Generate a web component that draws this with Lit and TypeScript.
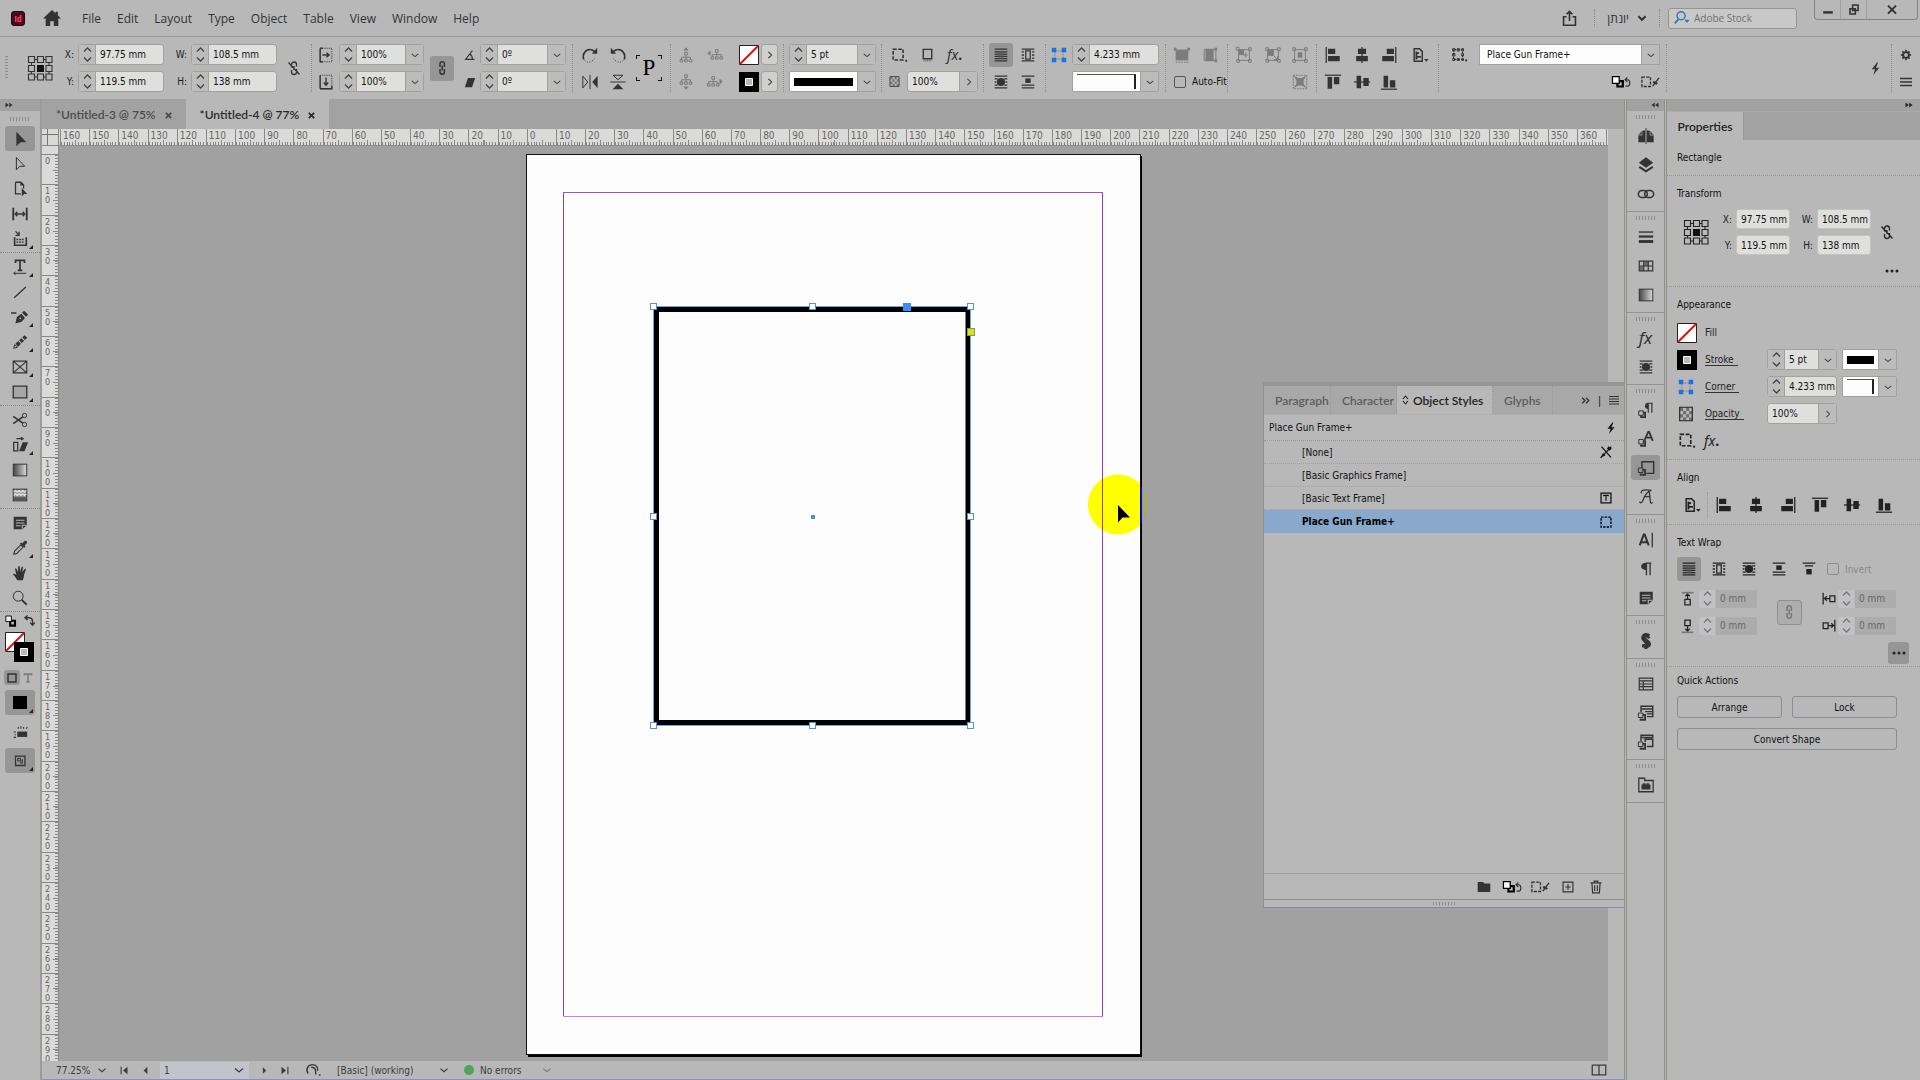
import { LitElement, html, svg, css, nothing } from "lit";
import { customElement } from "lit/decorators.js";
import { classMap } from "lit/directives/class-map.js";

/* ---------- icon set (20 x 20 grid, strokes by default, .f = filled) ---------- */
const wrapLines = svg`<path d="M3 3.5h14M3 16.5h14" stroke-width="1.6"/>`;
const ICONS: Record<string, unknown> = {
  select: svg`<path class="f" d="M6 2v16l4.6-4.4H17z"/>`,
  direct: svg`<path d="M6 2.8v13.6l3.8-3.9h5.4z"/>`,
  pageTool: svg`<path d="M5 2.500h6l3 3v4M5 2.500v13h6M11 2.500v3h3" stroke-width="1.400"/><path class="f" d="M12 9v9l2.600-2.400H18z"/>`,
  gap: svg`<path d="M2.500 3v14M17.500 3v14" stroke-width="2"/><path d="M5 10h10M7 7.500 4.600 10 7 12.500M13 7.500l2.400 2.500-2.400 2.500" stroke-width="1.500"/>`,
  collect: svg`<path d="M4 8v9h13V8" stroke-width="1.800"/><path d="M6 10.500h2m1 0h2m1 0h2M6 13.500h2m1 0h2m1 0h2" stroke-width="1.600"/><path d="M5 1.500l4 4M9 2v4H5" stroke-width="1.400"/>`,
  type: svg`<path d="M5 5.500V2.700h10v2.800M10 2.700v11M7.500 13.700h5" stroke-width="1.900"/><path d="M3 17h14M5 15.500 3 17l2 1.500"/>`,
  line: svg`<path d="M3.500 16.500l13-12" stroke-width="1.500"/>`,
  pen: svg`<path class="f" d="M5 17l1.500-7 5-3.500 4 4.500-4 4.500zM12.300 5.300l2.200-2.200 4.500 4-2.300 2.500z"/><path d="M0 5.500h6M5.500 16.500l4-4" stroke-width="1.600"/><circle cx="10.300" cy="11.500" r="1" fill="#b8b8b8" stroke="none"/>`,
  pencil: svg`<path d="M3 17l1.200-4.200 3 3z"/><path class="f" d="M5 12l3-3 3 3-3 3.200zM9 8l2.500-2.300 3 3L12 11zM12.500 4.800l2.700-2.300 2.800 2.800-2.500 2.400z"/>`,
  frame: svg`<path d="M2.500 3.500h15v13h-15zM2.500 3.500l15 13M17.500 3.500l-15 13" stroke-width="1.300"/>`,
  rect: svg`<path d="M2.500 3.500h15v13h-15z" stroke-width="1.500" fill="#a6a6a6"/>`,
  scissors: svg`<circle cx="15" cy="5" r="2.400"/><circle cx="15" cy="15" r="2.400"/><path d="M2.500 6l10.700 7.500M2.500 14l10.700-7.500" stroke-width="1.800"/>`,
  transform: svg`<path d="M3 7h4.500v9.500H3zM6 3h7M11 1.500l2.500 1.500L11 4.500" stroke-width="1.400"/><path class="f" d="M9 17l4-10h6l-4 10z"/>`,
  gradient: svg`<rect x="2.500" y="3.500" width="15" height="13" fill="url(#gr)"/>`,
  feather: svg`<rect x="2.500" y="3.500" width="15" height="13" fill="#8a8a8a"/><path d="M3 7l2-2 2 2 2-2 2 2 2-2 2 2 2-2M3 10.500l2-2 2 2 2-2 2 2 2-2 2 2 2-2" stroke="#e0e0e0" stroke-width="1.500"/><path d="M3.500 14h13" stroke-width="3" stroke="#555"/>`,
  note: svg`<path class="f" d="M3 3h14.500v9.500l-5 4.500H3z"/><path d="M5.500 7h9.500M5.500 10h9.500M5.500 13h5M12.500 16.500v-4h4.500" stroke="#b8b8b8" stroke-width="1.200"/>`,
  dropper: svg`<path d="M3 17l1-3.500 7-7 2.500 2.500-7 7z" stroke-width="1.200"/><path class="f" d="M10 5l1.300-1 1.500.6L15 2.200c1.800-1 3.600.8 2.600 2.600L15.300 7l.6 1.500-1 1.300z"/>`,
  hand: svg`<path class="f" d="M7 18c-1.500-2.500-3-4.500-5-6.500.6-1.300 2-1 4 .8L4.500 5.500c.2-1 1.400-1 1.700 0L7.700 9 8 3c.2-1.200 1.600-1.200 1.800 0l.3 5.700L11.700 3.500c.4-1 1.600-.8 1.600.3l-.8 5.400 2.600-3.700c.8-.7 1.700 0 1.400 1L14.500 12c-.3 2.600-.5 4-1.500 6z"/>`,
  zoom: svg`<circle cx="8" cy="8" r="5.500"/><path d="M12 12l5.500 5.500" stroke-width="2"/>`,
  screen: svg`<path class="f" d="M7 9.500h11v6H7z"/><path d="M8 6.500v-2M11 6.500v-3M14 6.500v-2M17 6.500l1-2M5.500 10H3M5.500 13H4M5.500 16H3" stroke-width="1.200"/>`,
  preview: svg`<path d="M5 4.500h10.500v10.500H5z" stroke-width="1.400"/><path d="M7.500 7h3v3h-3zM11 10.500v2.500M12.500 8v5" />`,
  boxSel: svg`<path d="M5 5h10v10H5z" stroke-width="1.800"/>`,
  tSmall: svg`<path d="M5.500 7V5h9v2M10 5v10M8 15h4" stroke-width="1.800" stroke="#777"/>`,
  swap: svg`<path d="M5 5h4c3 0 5 2 5 5v4M7.500 2L4 5l3.500 3M11 11.500l3 3.500 3-3.500" stroke-width="1.900"/>`,
  defaults: svg`<path d="M9 8.500h6v6H9z" fill="none" stroke="#000" stroke-width="2.600"/><path d="M3.500 2.500h7v7h-7z" fill="#eee" stroke="#000"/>`,
  home: svg`<path class="f" d="M10 1L0 10.500h3V19h5v-5.500h4V19h5v-8.500h3L16.500 7V3h-2.500v1.800z"/>`,
  share: svg`<path d="M6.500 8H3v10h14V8h-3.500M10 13V2M6.500 5L10 1.700 13.500 5" stroke-width="1.900"/>`,
  chev: svg`<path d="M6 8.500l4 3.500 4-3.500" stroke-width="1.300"/>`,
  chevB: svg`<path d="M6 8l4 4 4-4" stroke-width="2.200"/>`,
  chevR: svg`<path d="M8 6l4 4-4 4" stroke-width="1.300"/>`,
  ffwd: svg`<path class="f" d="M3 5v10l6.500-5zM10.500 5v10l6.500-5z"/>`,
  rwd: svg`<path class="f" d="M9.500 5v10L3 10zM17 5v10l-6.500-5z"/>`,
  more: svg`<path d="M4 5l5 5-5 5M11 5l5 5-5 5" stroke-width="2.400"/>`,
  linkBroken: svg`<path d="M7.500 9.500V6.500a2.500 2.500 0 015 0v2M12.500 11v3a2.500 2.500 0 01-5 0v-2M10 8v4M4.500 4.500l11 12" stroke-width="1.300"/>`,
  link: svg`<path d="M8 9V6a2.200 2.200 0 014.400 0v3M12.400 11v3A2.200 2.200 0 018 14v-3M10.200 7.500v5" stroke-width="1.500"/>`,
  scaleX: svg`<path d="M3.500 2.500h13v15h-13z" stroke-dasharray="1 1"/><path d="M3.500 2.500h3m-3 0v15h3M6 10h7M10.500 7.500L13.500 10l-3 2.500" stroke-width="1.500"/>`,
  scaleY: svg`<path d="M3.500 2.500h13v15h-13z" stroke-dasharray="1 1"/><path d="M3.500 2.500v15M3.500 17.500h13v-3M10 5v8M7.500 10.500l2.500 3 2.500-3" stroke-width="1.500"/>`,
  angle: svg`<path d="M15.500 15.500H4.500L13 4.500M10 9c2 1 3 3.500 3 6.500" stroke-width="1.400"/>`,
  shear: svg`<path class="f" d="M3.500 16.500l4-11.500h9l-4 11.500z"/>`,
  rotCW: svg`<path d="M3 15C1 9 5 4 10 4c2 0 3.500.7 5 2" stroke-width="1.700"/><path class="f" d="M12 8.500h6V2z"/><path d="M4 16c3 3 9 3 12-4" stroke-dasharray="1 2"/>`,
  rotCCW: svg`<path d="M17 15c2-6-2-11-7-11-2 0-3.500.7-5 2" stroke-width="1.700"/><path class="f" d="M8 8.500H2V2z"/><path d="M16 16c-3 3-9 3-12-4" stroke-dasharray="1 2"/>`,
  flipH: svg`<path d="M2 3.500v13L7.500 10zM10 2v16" /><path class="f" d="M18.500 3v14L12.500 10z"/>`,
  flipV: svg`<path d="M4.500 2.500h11L10 7.500zM1.500 10h17"/><path class="f" d="M4 18h12l-6-6z"/>`,
  treeU: svg`<path d="M8.500 7h3v3h-3zM3.500 15h3v2.500h-3zM8.500 15h3v2.500h-3zM13.500 15h3v2.500h-3zM10 10v5M5 15v-2.500h10V15"/><path class="f" d="M7 5l3-3.500L13 5z"/>`,
  treeL: svg`<path d="M10.500 4h3v3h-3zM5.500 12h3v2.500h-3zM10.500 12h3v2.500h-3zM15.500 12h3v2.500h-3zM12 7v5M7 12V9.500h10V12"/><path class="f" d="M5 5v6L1.500 8z"/>`,
  treeD: svg`<path d="M8.500 2h3v3h-3zM3.500 10h3v2.500h-3zM8.500 10h3v2.500h-3zM13.500 10h3v2.500h-3zM10 5v5M5 10V7.500h10V10"/><path class="f" d="M7 15l3 3.500L13 15z"/>`,
  treeR: svg`<path d="M6.500 4h3v3h-3zM1.500 12h3v2.500h-3zM6.500 12h3v2.500h-3zM11.500 12h3v2.500h-3zM8 7v5M3 12V9.500h10V12"/><path class="f" d="M15 6v7l3.500-3.500z"/>`,
  frameOpts: svg`<path d="M3.500 3.500h11v12h-11z" stroke-dasharray="4 1.700" stroke-width="1.700"/><circle class="f" cx="18" cy="16.500" r="1.200"/>`,
  square: svg`<path d="M5 4h10v11H5z" stroke-width="1.600"/><path d="M5.500 17.500h10" stroke-dasharray="1 1"/>`,
  checker: svg`<path d="M3 2.500h14v15H3z" stroke-width="1.300"/><path class="f" d="M3.500 3h3.300v3.600H3.500zM10.200 3h3.300v3.600h-3.300zM6.800 6.600h3.400v3.600H6.800zM13.500 6.600h3v3.600h-3zM3.500 10.200h3.300v3.600H3.500zM10.200 10.200h3.300v3.600h-3.300zM6.800 13.800h3.400V17H6.800zM13.500 13.800h3V17h-3z" opacity=".5"/>`,
  wrapNone: svg`${wrapLines}<path d="M3 6.500h14M3 9h14M3 11.500h14M3 14h14" stroke-width="1.200"/><path d="M7 5.500h6v9H7z" fill="#555" stroke="none" opacity=".55"/>`,
  wrapBox: svg`${wrapLines}<path d="M3 6.500h2.500M3 10h2.500M3 13.500h2.500M14.500 6.500H17M14.500 10H17M14.500 13.500H17M7.500 5.500h5v9h-5z" stroke-width="1.400"/>`,
  wrapShape: svg`${wrapLines}<path d="M3 6.500h3.500M3 10h2M3 13.500h3.500M13.500 6.500H17M15 10h2M13.500 13.500H17" stroke-width="1.400"/><circle class="f" cx="10" cy="10" r="4.500"/>`,
  wrapJump: svg`${wrapLines}<path d="M3 13.500h14" stroke-width="1.400"/><path class="f" d="M7 6h6v5H7z"/>`,
  wrapNext: svg`<path d="M3 3.500h14M5.500 6.500h9" stroke-width="1.600"/><path class="f" d="M7 10h6v6H7z"/>`,
  corner: svg`<path d="M5.500 5.500h9v9h-9z" stroke="#8c7f77" stroke-dasharray="2 1"/><path fill="#1473e6" stroke="none" d="M2 2h5v5H2zM13 2h5v5h-5zM2 13h5v5H2zM13 13h5v5h-5z"/>`,
  fitFill: svg`<path d="M3.500 4.500h13v11h-13z" fill="#7c7c7c"/><path d="M3 18h14" stroke-dasharray="2 1"/><path class="f" d="M1 2h3v3H1zM16 2h3v3h-3z"/>`,
  fitProp: svg`<path d="M3.500 4h13v12h-13z"/><path class="f" d="M5 3h9v14H5zM15 15h3v3h-3zM15 2h3v3h-3z"/>`,
  fitCont: svg`<path d="M4 4h12v12H4zM1.500 1.500h3v3h-3zM15 2h3v3h-3zM2 15h3v3H2zM15 15h3v3h-3z"/><path class="f" d="M4 4h6v6H4z"/><path d="M9 10h5M12 7v6"/>`,
  fitFrame: svg`<path d="M4 4h12v12H4zM2 2h3v3H2zM15 2h3v3h-3zM2 15h3v3H2zM15 15h3v3h-3z"/><path class="f" d="M4 4h7v7H4z"/><path d="M11 11l4 4M15 11v4h-4"/>`,
  fitCenter: svg`<path d="M4 4h12v12H4zM2 2h3v3H2zM15 2h3v3h-3zM2 15h3v3H2zM15 15h3v3h-3z"/><path class="f" d="M7.500 7h5v6h-5z"/>`,
  fitSmart: svg`<path d="M2.500 2.500h15v15h-15z" stroke-dasharray="2 1"/><path class="f" d="M3 3l5 2.500h4L17 3l-3 5v4l3 5-5-3H8l-5 3 3-5V8z"/>`,
  alL: svg`<path d="M2.500 1v18" stroke-width="1.400"/><path class="f" d="M4.500 3h8v6h-8zM4.500 11h13v6h-13z"/>`,
  alC: svg`<path d="M10 1v18" stroke-width="1.400"/><path class="f" d="M5.500 3h9v6h-9zM3.500 11h13v6h-13z"/>`,
  alR: svg`<path d="M17.500 1v18" stroke-width="1.400"/><path class="f" d="M7.500 3h8v6h-8zM2.500 11h13v6h-13z"/>`,
  alT: svg`<path d="M1 2.500h18" stroke-width="1.400"/><path class="f" d="M4 4.500h5v13H4zM11 4.500h6v8h-6z"/>`,
  alM: svg`<path d="M1 10h18" stroke-width="1.400"/><path class="f" d="M4 3h5v14H4zM11.500 5.500h6v9h-6z"/>`,
  alB: svg`<path d="M1 18h18" stroke-width="1.400"/><path class="f" d="M4 3h5v13H4zM11 8h6v8h-6z"/>`,
  alTo: svg`<path d="M3.500 3h6l3 3v11h-9z" stroke-width="1.600"/><path d="M6 6v9M6 8h3M6 12h5" stroke-width="2"/><path class="f" d="M14.500 14.500h5L17 17.500z"/>`,
  objStyle: svg`<path d="M4 4h10v11H4z" stroke-dasharray="2.500 1.500"/><path d="M3 3h2.500v2.500H3zM8 3h2.500v2.500H8zM13 3h2v2.500h-2zM3 8.500h2.500V11H3zM13 8.500h2V11h-2zM3 14h2.500v2H3zM8 14h2.500v2H8zM13 14h2v2h-2z"/><circle class="f" cx="18" cy="16" r="1.200"/>`,
  clearOv: svg`<path d="M6 9h6v6H6z" stroke="#000" stroke-width="2.400"/><path d="M.5 4h7.500v7.500H.5z" fill="#fff" stroke="#000" stroke-width="1.400"/><path d="M15 7.500h2.500c3 0 3 7 0 7H15M17 5l-2.500 2.500L17 10" stroke-width="1.300"/>`,
  clearAttr: svg`<path d="M1 4.500h9.500v10.500H1z" stroke-dasharray="3.500 1.300" stroke-width="1.500"/><path d="M13 14.500L20 5.500" stroke-width="1.500"/><path class="f" d="M14 8.500l5 3-2 1.500-4-2z"/>`,
  bolt: svg`<path class="f" d="M12 2L5 11h4.500L7 18.500 15 9h-4.500L13.500 2z"/>`,
  gear: svg`<circle cx="10" cy="10" r="3.600" stroke-width="2.400"/><path d="M10 3.500v3M10 13.500v3M3.500 10h3M13.500 10h3M5.500 5.500l2 2M12.500 12.500l2 2M14.500 5.500l-2 2M7.500 12.500l-2 2" stroke-width="2"/>`,
  menu: svg`<path d="M4 6.500h12M4 10h12M4 13.500h12" stroke-width="1.300"/>`,
  menu4: svg`<path d="M5 6.500h10M5 9h10M5 11.500h10M5 14h10"/>`,
  pages: svg`<path class="f" d="M1.500 9l4-4.500 3.500-1v13.500H1.500zM11 3.500l3.500 1 4 4.500v8H11z"/><path d="M10 1v18" stroke-width="1"/><path d="M5.500 5v4h-4M14.500 5v4h4" stroke="#b8b8b8" stroke-width=".8"/>`,
  layers: svg`<path class="f" d="M10 1.500L18 7.500 10 13 2 7.500z"/><path d="M2.500 12L10 17l7.500-5" stroke-width="2.400"/>`,
  links: svg`<rect x="1.500" y="6" width="10" height="8" rx="4" stroke-width="1.700"/><rect x="8.500" y="6" width="10" height="8" rx="4" stroke-width="1.700"/>`,
  strokeP: svg`<path d="M2 4.500h16" stroke-width="1.500"/><path d="M2 9.500h16" stroke-width="2.400"/><path d="M2 15h16" stroke-width="3.200"/>`,
  swatches: svg`<path d="M2.500 4.500h15v11h-15zM2.500 10h15M7.500 4.500v11M12.500 4.500v11" stroke-width="1.300"/><path class="f" d="M8 5h4.500v5H8zM3 10.500h4v4.500H3z" opacity=".6"/>`,
  paraStyle: svg`<path d="M12.500 2v11M16.500 2v11M17.500 2.500h-5" stroke-width="1.300"/><path class="f" d="M12.500 2v7c-5 .5-5-7 0-7z"/><path d="M2 11h5v5H2z" fill="#b8b8b8"/><path d="M7 13h2v5H4.500v-1.500" stroke-width="2"/>`,
  charStyle: svg`<path d="M8.500 11L12.500 2h1l4 10M10 8.500h6" stroke-width="2"/><path d="M2 10.500h5v5H2z" fill="#b8b8b8"/><path d="M7 12.500h2v5H4.500v-1.500" stroke-width="2"/>`,
  objStyles: svg`<path d="M5.500 10V3h13v13h-8" stroke-width="1.600"/><path d="M1.500 10h5v5h-5z"/><path d="M6.500 12h2.500v5.500H4V16" stroke-width="2"/>`,
  glyphs: svg`<path d="M5 6C3.500 2 9 1.500 16 2.500 12 3 8 9 6.500 14 5.500 17 3 17 3 15M13.500 2.500L15 16c.5 1.500 1.500 1 2.500 0M8 9.500h7" stroke-width="1.400"/>`,
  charP: svg`<path d="M3 16L7.500 4h1L13 16M4.500 12.500h7" stroke-width="2.200"/><path d="M17 2v16" stroke-width="1.400"/>`,
  paraP: svg`<path d="M10.500 3v14M14.500 3v14M16 3.500h-6" stroke-width="1.500"/><path class="f" d="M10.500 3v8C2.500 11 2.500 3 10.500 3z"/>`,
  script: svg`<path class="f" d="M8 1.500c2.500-1 5.500 0 6.500 1.500l-1 2 1.500 1-2 1.500-4-2 5.500 5c2 2.500 1 6-2 7l-1.500 1.500H8l.5-1.500-3-.5v-3l3-1 2 2L5.500 9C4 7 4.500 3.500 8 1.500z"/>`,
  table: svg`<path d="M2.500 3.500h15v13h-15zM2.500 6.500h15M2.500 10h15M2.500 13h15M7 6.500v10" stroke-width="1.300"/>`,
  tblStyle: svg`<path d="M4.500 9V2.500h13V14H11M4.500 5.500h13M9 8.500h8.500M11 11h6.500" stroke-width="1.600"/><path d="M1.500 10h5v5h-5z"/><path d="M6.500 12h2.500v5.500H4V16" stroke-width="2"/>`,
  cellStyle: svg`<path d="M4.500 9V2.500h13V5h-13M9 10V7h8.500v8H11" stroke-width="1.600"/><path d="M1.500 10h5v5h-5z"/><path d="M6.500 12h2.500v5.500H4V16" stroke-width="2"/>`,
  library: svg`<path d="M2 2.500h6.500V5H18v12.500H2z" stroke-width="1.400"/><path class="f" d="M5 9.500h1.500V8h3v1.500h1V8h3v1.500H15V15H5z"/>`,
  none: svg`<path d="M4 16.500L16 4M5 4l10.500 12" stroke-width="1.400"/><path class="f" d="M4.500 16l2-5 3 2.500zM13 3.500l3.500 3-3 2-2.500-2.500z"/>`,
  txtFrame: svg`<path d="M4.500 4.500h11v11h-11z" stroke-width="1.400"/><path d="M7.500 8V7h5v1M10 7v6" stroke-width="1.300"/>`,
  objFrame: svg`<path d="M4.500 4.500h11v11h-11z" stroke-dasharray="2.700 1.300" stroke-width="1.500"/>`,
  folder: svg`<path class="f" d="M3 4.500h6l1.500 1.500H17v9.500H3z"/>`,
  plusBox: svg`<path d="M4.500 4.500h11v11h-11zM10 7v6M7 10h6" stroke-width="1.300"/>`,
  trash: svg`<path d="M4 5.500h12M8 5V3.500h4V5M5.500 6l.7 10.500h7.600L14.500 6M8.500 8v6.500M11.500 8v6.500" stroke-width="1.300"/>`,
  offT: svg`<path d="M3 3h13" stroke-width="1.800" stroke="#777"/><path d="M9.500 4v6M7 7l2.500-2.500L12 7M6.500 10.500h6v6h-6z" stroke-width="1.400"/>`,
  offB: svg`<path d="M3 17h13" stroke-width="1.800" stroke="#777"/><path d="M9.500 16v-6M7 13l2.500 2.500L12 13M6.500 3.500h6v6h-6z" stroke-width="1.400"/>`,
  offL: svg`<path d="M3.500 3v13M5 9.500h6M7.500 7L5 9.500 7.500 12M11 6.500h5.500v6.500H11z" stroke-width="1.400"/>`,
  offR: svg`<path d="M16.500 3v13M15 9.500H9M12.500 7L15 9.500 12.500 12M3.500 6.500H9v6.500H3.500z" stroke-width="1.400"/>`,
  first: svg`<path d="M5.500 5v10" stroke-width="1.500"/><path class="f" d="M14 5v10l-6-5z"/>`,
  prev: svg`<path class="f" d="M12.500 5v10l-5-5z"/>`,
  next: svg`<path class="f" d="M7.500 5v10l5-5z"/>`,
  last: svg`<path d="M14.500 5v10" stroke-width="1.500"/><path class="f" d="M6 5v10l6-5z"/>`,
  preflight: svg`<path d="M4.500 14c-3-5 0-10 5-10 4 0 6.500 3 5.500 7" stroke-width="1.600"/><path d="M8 7c3 0 5 2 5 5v3" stroke-width="1.600"/><circle class="f" cx="17.500" cy="15.500" r="1"/>`,
  split: svg`<path d="M2.500 4.500h15v11h-15zM10 4.500v11" stroke-width="1.400"/>`,
  min: svg`<path d="M4 13h12" stroke-width="3"/>`,
  restore: svg`<path d="M8.500 4.500h6v6h-6zM5.500 8.500h6v6h-6z" stroke-width="1.700"/>`,
  close: svg`<path d="M5 4.500l10 10M15 4.500l-10 10" stroke-width="2.500"/>`,
  tabX: svg`<path d="M4 4l12 12M16 4L4 16" stroke-width="4"/>`,
  search: svg`<circle cx="9" cy="7.500" r="4.500" stroke="#2f6fb5" stroke-width="1.500"/><path d="M6 11.500L2 16" stroke="#2f6fb5" stroke-width="1.800"/><path d="M12.500 12h6l-3 3.500z" fill="#1f78c8" stroke="none"/>`,
  dots: svg`<circle class="f" cx="4.500" cy="10" r="1.700"/><circle class="f" cx="10" cy="10" r="1.700"/><circle class="f" cx="15.500" cy="10" r="1.700"/>`,
};

const ic = (name: string, size = 18) => svg`<svg class="ic" viewBox="0 0 20 20" width=${size} height=${size} aria-hidden="true">
  ${name === "gradient" ? svg`<defs><linearGradient id="gr"><stop offset="0" stop-color="#444"/><stop offset="1" stop-color="#dcdcdc"/></linearGradient></defs>` : nothing}
  ${ICONS[name]}</svg>`;

const btn = (name: string, cls = "", size = 18, label = name) =>
  html`<button class="b ${cls}" aria-label=${label}>${ic(name, size)}</button>`;

const fx = (dot = true) => html`<button class="b fx" aria-label="Effects"><i>fx</i>${dot ? html`<span class="fdot">.</span>` : nothing}</button>`;

const refGrid = svg`<svg class="ic" width="26" height="26" viewBox="0 0 26 26" aria-hidden="true">
  <path d="M1.500 1.500h6v6h-6zM10.500 1.500h6v6h-6zM19 1.500h6v6h-6zM1.500 10.500h6v6h-6zM19 10.500h6v6h-6zM1.500 19h6v6h-6zM10.500 19h6v6h-6zM19 19h6v6h-6zM7.500 4.500h3M16.500 4.500h2.500M7.500 22h3M16.500 22h2.500M4.500 7.500v3M4.500 16.500v2.500M22 7.500v3M22 16.500v2.500"/>
  <path fill="#111" stroke="none" d="M10 10h7v7h-7z"/></svg>`;

const spin = html`<button class="spin" aria-label="Step value"><svg class="ic" width="15" height="19" viewBox="0 0 15 19"><path d="M4 6.500L7.500 3 11 6.500M4 12.500L7.500 16 11 12.500" stroke-width="1.300"/></svg></button>`;

let uid = 0;
interface FieldOpts { spin?: boolean; drop?: string; off?: boolean; cls?: string }
const field = (label: string, value: string, o: FieldOpts = {}) => html`<span class="field ${o.cls ?? ""} ${o.off ? "off" : ""}">
  ${o.spin ? spin : nothing}<input aria-label=${label} .value=${value} ?disabled=${!!o.off} />${o.drop
    ? html`<button class="drop" aria-label="${label} options">${ic(o.drop, 16)}</button>` : nothing}</span>`;
const labelled = (label: string, value: string, o: FieldOpts = {}) => {
  const id = `v${uid++}`;
  return html`<label class="lb" for=${id}>${label}</label><span class="field">${o.spin ? spin : nothing}<input id=${id} .value=${value} /></span>`;
};
const swatchNone = svg`<svg width="20" height="20" viewBox="0 0 20 20" aria-hidden="true"><path d="M.5.500h19v19H.5z" fill="#fff" stroke="#222"/><path d="M1 19L19 1" stroke="#e01010" stroke-width="2"/></svg>`;
const swatchStroke = svg`<svg width="20" height="20" viewBox="0 0 20 20" aria-hidden="true"><path d="M0 0h20v20H0z" fill="#000"/><path d="M6.500 6.500h7v7h-7z" fill="#b8b8b8" stroke="#fff"/></svg>`;
const strokePrev = html`<button class="prev" aria-label="Stroke type"><span class="bar"></span></button><button class="drop" aria-label="Stroke type options">${ic("chev", 16)}</button>`;
const cornerPrev = html`<button class="prev" aria-label="Corner shape"><span class="crn"></span></button><button class="drop" aria-label="Corner shape options">${ic("chev", 16)}</button>`;

const shared = css`
  :host { box-sizing: border-box; color: #333; --panel: #b8b8b9; --line: #9a9a9a; }
  *, *::before, *::after { box-sizing: border-box; }
  button, input, select { font: inherit; color: inherit; margin: 0; padding: 0; border: 0; background: none; border-radius: 0; min-width: 0; }
  svg { display: block; flex: none; }
  .ic { fill: none; stroke: currentColor; stroke-width: 1.100; overflow: visible; }
  .ic .f { fill: currentColor; stroke: none; }
  .b { display: flex; align-items: center; justify-content: center; }
  .on { background: #969696; border-radius: 3px; }
  .dim { color: #7c7c7c; }
  .fx { font: 14px "Noto Sans", sans-serif; line-height: 18px; align-items: baseline; }
  .fdot { font-weight: 700; }
  .field { display: flex; height: 21px; border: 1px solid #a2a29a; border-radius: 3px; background: #dfdfdd; color: #111; overflow: hidden; }
  .field input { flex: 1; width: 0; padding-left: 4px; }
  .spin { width: 17px; flex: none; background: #bcbcbc; border-right: 1px solid #a2a29a; display: flex; align-items: center; justify-content: center; color: #444; }
  .drop { width: 18px; flex: none; background: #bcbcbc; border-left: 1px solid #a2a29a; display: flex; align-items: center; justify-content: center; color: #444; }
  .field.off { background: #acacac; border-color: #b8b8b9; color: #666; }
  .off .spin { background: #c2c2c4; border-color: #b8b8b9; color: #777; }
  .lb { text-align: right; padding-right: 4px; line-height: 21px; color: #222; }
  .prevbox { display: flex; height: 21px; border: 1px solid #a2a29a; border-radius: 2px; overflow: hidden; }
  .prev { flex: 1; background: #fdfdfd; display: flex; padding: 0 4px; align-items: center; }
  .bar { flex: 1; height: 8px; background: #000; }
  .crn { flex: 1; height: 15px; border-top: 1px solid #555; border-right: 2px solid #222; }
`;

/* ---------- application menu bar ---------- */
@customElement("menu-bar")
class MenuBar extends LitElement {
  static styles = [shared, css`
    :host { display: flex; height: 37px; align-items: center; background: var(--panel); border-bottom: 1px solid var(--line); font: 12px "Open Sans", sans-serif; padding-left: 11px; }
    .logo { width: 14px; height: 15px; border-radius: 3px; background: #4b0a22; border: 1px solid #2d0413; color: #ff3f78; font: 700 8px/13px "Open Sans", sans-serif; text-align: center; margin-right: 18px; }
    nav { display: flex; gap: 16px; padding-left: 21px; flex: 1; }
    .sep { width: 1px; height: 18px; border-left: 1px dotted #888; }
    .user { display: flex; align-items: center; gap: 4px; padding: 0 8px 0 12px; }
    .share { margin-right: 16px; }
    .find { display: flex; align-items: center; width: 129px; height: 21px; border: 1px solid #95958f; border-radius: 3px; background: #c8c8c8; margin: 0 17px 0 8px; padding-left: 4px; font-size: 10px; }
    .find input { flex: 1; width: 0; padding-left: 3px; }
    .find input::placeholder { color: #707070; opacity: 1; }
    .win { display: flex; align-self: flex-start; height: 20px; border: 1px solid #85857f; border-top: 0; border-radius: 0 0 4px 4px; margin-right: 2px; width: 104px; }
    .win button { flex: 1; }
    .win button + button { border-left: 1px solid #a0a09a; }
    .win .x { flex: 2; }
  `];
  render() {
    return html`<span class="logo">Id</span>${btn("home", "", 18, "Home")}
      <nav>${["File", "Edit", "Layout", "Type", "Object", "Table", "View", "Window", "Help"].map((t) => html`<button>${t}</button>`)}</nav>
      ${btn("share", "share", 17, "Share")}<span class="sep"></span>
      <button class="user"><span dir="rtl">יונתן</span>${ic("chevB", 18)}</button><span class="sep"></span>
      <span class="find">${ic("search", 18)}<input aria-label="Search Adobe Stock" placeholder="Adobe Stock" /></span>
      <span class="win">${btn("min", "", 16, "Minimize")}${btn("restore", "", 18, "Restore")}${btn("close", "x", 16, "Close")}</span>`;
  }
}

/* ---------- control bar ---------- */
@customElement("control-bar")
class ControlBar extends LitElement {
  static styles = [shared, css`
    :host { display: flex; height: 62px; padding: 7px 0; background: var(--panel); font: 10px "DejaVu Sans Condensed", "Noto Sans", sans-serif; }
    .g { display: grid; grid-template-rows: 21px 21px; row-gap: 6px; height: 48px; align-items: center; justify-items: center; border-right: 1px dotted #8d8d8d; flex: none; }
    .g > .field, .g > .lb, .g > .prevbox { justify-self: stretch; }
    .tall { grid-row: 1 / 3; }
    .ref { width: 54px; padding-left: 27px; display: flex; align-items: center; flex: none; background: repeating-linear-gradient(#8c8c8c 0 1px, transparent 1px 3px) 5px 50% / 3px 24px no-repeat; }
    .linkon { width: 24px; height: 25px; }
    .wrapon { width: 24px; height: 24px; }
    .pos { grid-template-columns: 24px 86px 27px 86px 34px; }
    .pos .tall { grid-column: 5; }
    .scl { grid-template-columns: 27px 85px 36px 20px 86px; padding-right: 6px; }
    .scl .tall { grid-column: 3; }
    .rot { grid-template-columns: 34px 21px 42px; }
    .rot .tall { grid-column: 3; }
    .p { font: 23px/25px "Liberation Serif", serif; color: #000; width: 26px; height: 26px; text-align: center; background-image:
      linear-gradient(#111,#111), linear-gradient(#111,#111), linear-gradient(#111,#111), linear-gradient(#111,#111),
      linear-gradient(#111,#111), linear-gradient(#111,#111), linear-gradient(#111,#111), linear-gradient(#111,#111);
      background-position: 0 0, 0 0, 100% 0, 100% 0, 0 100%, 0 100%, 100% 100%, 100% 100%;
      background-size: 4px 1px, 1px 4px, 4px 1px, 1px 4px, 4px 1px, 1px 4px, 4px 1px, 1px 4px; background-repeat: no-repeat; }
    .clr { grid-template-columns: 30px 27px 9px 24px 17px; padding-right: 5px; }
    .arr { width: 17px; height: 21px; border: 1px solid #a2a29a; border-radius: 3px; background: #cfcfcd; justify-self: end; }
    .wt { grid-template-columns: 87px; padding: 0 5px; }
    .eff { display: flex; flex-direction: column; gap: 6px; width: 102px; align-items: stretch; }
    .row { display: flex; height: 21px; align-items: center; }
    .r1 { padding-left: 8px; gap: 11px; }
    .r2 { padding-left: 6px; }
    .op { flex: 1; margin: 0 5px 0 6px; }
    .wr { grid-template-columns: 34px 20px; padding-right: 7px; }
    .cor { grid-template-columns: 26px 87px; padding-right: 6px; }
    .fit { grid-template-columns: 32px 24px; padding-right: 5px; }
    .chk { grid-column: 1 / 3; display: flex; align-items: center; gap: 6px; justify-self: start; padding-left: 8px; white-space: nowrap; width: 56px; color: #111; }
    .chk input { appearance: none; width: 12px; height: 12px; border: 1px solid #555; border-radius: 2px; flex: none; }
    .fit2 { grid-template-columns: 31px 27px 27px; padding-right: 3px; }
    .fit2 .third { grid-column: 3; }
    .al { grid-template-columns: 31px 27px 27px 36px; }
    .sty { display: flex; flex-direction: column; gap: 6px; padding-right: 6px; width: 228px; align-items: stretch; }
    .sty .field { flex: 1; background: #fdfdfd; border-radius: 0; }
    .sty select { flex: 1; appearance: none; padding-left: 7px; }
    .sty .row:last-child { justify-content: flex-end; gap: 11px; padding-right: 1px; }
    .fill { flex: 1; }
    .end { grid-template-columns: 28px; border: 0; }
    .boltg { padding: 0 8px 0 10px; }
    .c40 { width: 40px; flex: none; }
  `];
  render() {
    return html`<span class="ref">${refGrid}</span>
      <div class="g pos">${labelled("X:", "97.75 mm", { spin: true })}${labelled("W:", "108.5 mm", { spin: true })}
        ${btn("linkBroken", "tall", 20, "Constrain dimensions")}
        ${labelled("Y:", "119.5 mm", { spin: true })}${labelled("H:", "138 mm", { spin: true })}</div>
      <div class="g scl">${ic("scaleX")}${field("Scale X", "100%", { spin: true, drop: "chev" })}${btn("link", "tall on linkon", 20, "Constrain scale")}
        ${ic("angle", 16)}${field("Rotation", "0º", { spin: true, drop: "chev" })}
        ${ic("scaleY")}${field("Scale Y", "100%", { spin: true, drop: "chev" })}${ic("shear", 16)}${field("Shear", "0º", { spin: true, drop: "chev" })}</div>
      <div class="g rot">${btn("rotCW")}${btn("rotCCW")}<span class="p tall">P</span>${btn("flipH")}${btn("flipV")}</div>
      <div class="g clr">${btn("treeU", "dim")}${btn("treeL", "dim")}<span></span><button aria-label="Fill">${swatchNone}</button>${btn("chevR", "arr", 16)}
        ${btn("treeD", "dim")}${btn("treeR", "dim")}<span></span><button aria-label="Stroke">${swatchStroke}</button>${btn("chevR", "arr", 16)}</div>
      <div class="g wt">${field("Stroke weight", "5 pt", { spin: true, drop: "chev" })}<span class="prevbox">${strokePrev}</span></div>
      <div class="g eff"><div class="row r1">${btn("frameOpts")}${btn("square", "", 17)}${fx()}</div>
        <div class="row r2">${ic("checker", 13)}${field("Opacity", "100%", { drop: "chevR", cls: "op" })}</div></div>
      <div class="g wr">${btn("wrapNone", "on wrapon")}${btn("wrapBox")}${btn("wrapShape")}${btn("wrapJump")}</div>
      <div class="g cor">${ic("corner", 18)}${field("Corner size", "4.233 mm", { spin: true })}<span></span><span class="prevbox">${cornerPrev}</span></div>
      <div class="g fit">${btn("fitFill", "dim")}${btn("fitProp", "dim")}<label class="chk"><input type="checkbox" />Auto-Fit</label></div>
      <div class="g fit2">${btn("fitCont", "dim")}${btn("fitFrame", "dim")}${btn("fitCenter", "dim")}${btn("fitSmart", "dim third")}</div>
      <div class="g al">${["alL", "alC", "alR", "alTo", "alT", "alM", "alB"].map((n) => btn(n))}</div>
      <div class="g sty"><div class="row">${btn("objStyle", "c40")}<span class="field"><select aria-label="Object style"><option>Place Gun Frame+</option></select><button class="drop" aria-label="Open styles">${ic("chev", 16)}</button></span></div>
        <div class="row">${btn("clearOv")}${btn("clearAttr")}</div></div>
      <span class="fill"></span>
      <div class="g boltg">${btn("bolt", "tall", 15, "Quick apply")}</div>
      <div class="g end">${btn("gear", "", 16, "Customize")}${btn("menu", "", 20, "Panel menu")}</div>`;
  }
}

/* ---------- tools ---------- */
@customElement("tool-box")
class ToolBox extends LitElement {
  static styles = [shared, css`
    :host { display: flex; flex-direction: column; background: var(--panel); border-right: 2px solid #9b9b9b; padding-bottom: 8px; }
    .head { height: 12px; background: #a2a2a2; padding-left: 4px; display: flex; align-items: center; flex: none; }
    .grip { height: 15px; width: 21px; align-self: center; background: repeating-linear-gradient(90deg, #8c8c8c 0 1px, transparent 1px 3px) 0 50% / 100% 4px no-repeat; flex: none; }
    .t { height: 25px; width: 30px; align-self: center; position: relative; flex: none; }
    .more::after { content: ""; position: absolute; right: 2px; bottom: 2px; border: 2px solid transparent; border-right-color: #222; border-bottom-color: #222; }
    hr { border: 0; border-top: 1px dotted #888; margin: 1px 0; width: 100%; flex: none; }
    .sw { display: flex; height: 17px; justify-content: space-between; padding: 0 3px; flex: none; }
    .fs { position: relative; height: 37px; margin: 0 4px; flex: none; }
    .fs .a { position: absolute; left: 1px; top: 2px; }
    .fs .s { position: absolute; left: 10px; top: 12px; }
    .md { display: flex; height: 21px; padding: 3px 4px; justify-content: space-between; flex: none; }
    .md .b { width: 16px; height: 15px; }
    .tall { height: 25px; margin: 2px 0; }
    .blk { background: #000; width: 14px; height: 13px; }
  `];
  render() {
    const t = (n: string, more = false, on = false) => html`<button class=${classMap({ b: true, t: true, more, on })} aria-label=${n}>${ic(n)}</button>`;
    return html`<div class="head">${ic("ffwd", 10)}</div><div class="grip"></div>
      ${t("select", false, true)}${t("direct")}${t("pageTool")}${t("gap")}${t("collect", true)}<hr />
      ${t("type", true)}${t("line")}${t("pen", true)}${t("pencil", true)}${t("frame", true)}${t("rect", true)}<hr />
      ${t("scissors")}${t("transform", true)}${t("gradient")}${t("feather")}<hr />
      ${t("note")}${t("dropper", true)}${t("hand")}${t("zoom")}<hr />
      <div class="sw">${btn("defaults", "", 16)}${btn("swap", "", 15)}</div>
      <div class="fs"><button class="a" aria-label="Fill">${swatchNone}</button><button class="s" aria-label="Stroke">${swatchStroke}</button></div>
      <div class="md">${btn("boxSel", "on", 16)}${btn("tSmall", "", 16)}</div>
      <button class="b t tall on more" aria-label="Apply color"><span class="blk"></span></button>
      <button class="b t tall" aria-label="Display">${ic("screen")}</button>
      <button class="b t tall on more" aria-label="Screen mode">${ic("preview")}</button>`;
  }
}

/* ---------- document window ---------- */
@customElement("document-view")
class DocumentView extends LitElement {
  static styles = [shared, css`
    :host { display: flex; flex-direction: column; min-width: 0; position: relative; background: var(--panel); }
    .tabs { display: flex; height: 30px; background: #a2a2a2; font: 600 12px/32px Lato, "Open Sans", sans-serif; flex: none; }
    .tab { display: flex; align-items: center; gap: 8px; padding: 2px 13px 0 14px; color: #4c4c4c; }
    .tab.cur { background: var(--panel); color: #2a2a2a; }
    .work { flex: 1; min-height: 0; display: grid; grid-template: 17px minmax(0, 1fr) / 17px minmax(0, 1fr) 16px; }
    .corner { background: #d8d8d6; border-right: 1px solid #888; border-bottom: 1px solid #888;
      background-image: linear-gradient(90deg, transparent 5px, #777 5px 6px, transparent 6px), linear-gradient(transparent 5px, #777 5px 6px, transparent 6px); }
    .hr, .vr { background: #dadad8; display: flex; font: 9px "DejaVu Sans Condensed", sans-serif; color: #666; overflow: hidden; }
    .hr { padding: 0 1px; border-bottom: 1px solid #8b8b8b; font-size: 10px; }
    .hr span { flex: 1 1 0; min-width: 0; border-left: 1px solid #888; padding-left: 2px; line-height: 14px; background:
      repeating-linear-gradient(90deg, #888 0 1px, transparent 1px 10%) 0 100% / 100% 3px no-repeat,
      linear-gradient(90deg, transparent 50%, #888 50%, #888 calc(50% + 1px), transparent calc(50% + 1px)) 0 100% / 100% 5px no-repeat; }
    .hr span:last-child { border-right: 1px solid #888; }
    .vr { border-right: 1px solid #8b8b8b; }
    .vin { display: flex; flex-direction: column; width: 100%; margin-bottom: -3px; padding-top: 8px; }
    .vin span { flex: 1 1 0; min-height: 0; border-top: 1px solid #888; padding: 2px 0 0 2px; line-height: 9px; width: 100%; background:
      repeating-linear-gradient(#888 0 1px, transparent 1px 10%) 100% 0 / 3px 100% no-repeat,
      linear-gradient(transparent 50%, #888 50%, #888 calc(50% + 1px), transparent calc(50% + 1px)) 100% 0 / 5px 100% no-repeat; }
    .vin b { display: block; font-weight: 400; width: 7px; text-align: center; }
    .canvas { background: #a1a1a1; position: relative; overflow: hidden; }
    .page { position: absolute; left: 460px; top: 0; }
    .rail { grid-row: 1 / 3; grid-column: 3; background: var(--panel); }
    .status { height: 19px; flex: none; display: flex; align-items: center; font: 10px "DejaVu Sans Condensed", sans-serif; border-bottom: 1px solid #8e8ec4; padding-left: 14px; color: #3c3c3c; }
    .status .b { flex: none; }
    .zm { width: 37px; }
    .nav { display: flex; margin-left: 6px; gap: 6px; }
    .n2 { margin-left: 3px; }
    .pg { display: flex; width: 89px; height: 17px; background: #c3c3cc; margin: 0 6px 0 7px; }
    .pg input { flex: 1; width: 0; padding-left: 4px; }
    .pre { margin-left: 12px; }
    .set { margin-left: 15px; width: 98px; }
    .dot { width: 10px; height: 10px; border-radius: 50%; background: #4fa457; margin: 0 6px 0 11px; }
    .err { width: 58px; }
    .grow { flex: 1; }
    .split { margin-right: 16px; }
  `];
  render() {
    const hs = Array.from({ length: 53 }, (_, i) => Math.abs((i - 16) * 10));
    const vs = Array.from({ length: 30 }, (_, i) => i * 10);
    const h = (x: number, y: number) => svg`<rect x=${x - 3} y=${y - 3} width="6" height="6" fill="#fff" stroke="#5b8fd0"/>`;
    return html`<div class="tabs">
        <div class="tab"><span>*Untitled-3 @ 75%</span>${btn("tabX", "", 9, "Close Untitled-3")}</div>
        <div class="tab cur"><span>*Untitled-4 @ 77%</span>${btn("tabX", "", 9, "Close Untitled-4")}</div></div>
      <div class="work"><div class="corner"></div>
        <div class="hr">${hs.map((n) => html`<span>${n}</span>`)}</div><div class="rail"></div>
        <div class="vr"><div class="vin">${vs.map((n) => html`<span>${String(n).split("").map((d) => html`<b>${d}</b>`)}</span>`)}</div></div>
        <div class="canvas">
          <svg class="page" width="640" height="920" viewBox="519 146 640 920" role="img" aria-label="Page 1">
            <rect x="528" y="156" width="614" height="901" fill="#000"/>
            <rect x="526.500" y="154.500" width="614" height="900" fill="#fdfdfd" stroke="#111"/>
            <clipPath id="pc"><rect x="527" y="155" width="613" height="899"/></clipPath>
            <clipPath id="oc"><rect x="1142" y="155" width="20" height="899"/></clipPath>
            <circle cx="1118" cy="504.500" r="30" fill="#a5a56e" clip-path="url(#oc)"/>
            <circle cx="1118" cy="504.500" r="30" fill="#ffff00" clip-path="url(#pc)"/>
            <path d="M1140 487h2v36h-2z" fill="#0000e0"/>
            <path d="M563.500 192.500v824M1102.500 192.500v824" stroke="#8a3fc0"/>
            <path d="M563 192.500h540" stroke="#a24fc4"/><path d="M564 1016.500h539" stroke="#dc78dc"/>
            <path d="M1102.500 479v51" stroke="#b04a10"/>
            <rect x="656.500" y="309.500" width="311.500" height="413" fill="none" stroke="#000" stroke-width="5"/>
            <rect x="653.500" y="306.500" width="317" height="419" fill="none" stroke="#6aa5e8"/>
            ${h(653.5, 306.5)}${h(812.5, 306.5)}${h(970.5, 306.5)}${h(653.5, 516.5)}${h(970.5, 516.5)}${h(653.5, 725.5)}${h(812.5, 725.5)}${h(970.5, 725.5)}
            <rect x="903" y="303" width="8" height="8" fill="#3d8cf5"/><rect x="811" y="515" width="4" height="4" fill="#4d8fd8"/>
            <rect x="967.500" y="328.500" width="7" height="7" fill="#e3e300" stroke="#6f9c86"/>
            <path d="M1118 505v17.500l4.500-5H1130z" fill="#000"/>
          </svg></div></div>
      <div class="status"><span class="zm">77.25%</span>${btn("chev", "", 18, "Zoom level")}
        <span class="nav">${btn("first", "", 15)}${btn("prev", "", 15)}</span>
        <span class="pg"><input aria-label="Page" .value=${"1"} />${btn("chev", "", 20, "Page list")}</span>
        <span class="nav n2">${btn("next", "", 13)}${btn("last", "", 15)}</span>
        <span class="nav pre">${btn("preflight", "", 18)}</span>
        <span class="set">[Basic] (working)</span>${btn("chev", "", 18, "Profile list")}
        <span class="dot"></span><span class="err">No errors</span>${btn("chev", "dim", 18, "Errors")}
        <span class="grow"></span>${btn("split", "split", 18, "Split layout")}</div>
      <slot></slot>`;
  }
}

/* ---------- floating Object Styles panel ---------- */
@customElement("styles-panel")
class StylesPanel extends LitElement {
  static styles = [shared, css`
    :host { display: flex; flex-direction: column; background: var(--panel); border: 1px solid #8f8f86; border-top: 4px solid #969696; border-bottom-color: #8888a8; font: 10px "DejaVu Sans Condensed", sans-serif; color: #111; }
    .tabs { display: flex; height: 29px; background: #a8a8a8; font: 600 12px/27px Lato, "Open Sans", sans-serif; color: #5c5c5c; border-bottom: 1px solid #b0b0b0; flex: none; }
    .tabs button { padding: 0 0 0 11px; text-align: left; overflow: hidden; white-space: nowrap; border-right: 1px dotted #999; flex: none; }
    .p1 { width: 67px; } .p2 { width: 66px; }
    .tabs .cur { background: var(--panel); color: #222; width: 96px; padding-left: 5px; display: flex; gap: 4px; align-items: center; }
    .p4 { width: 60px; }
    .ends { flex: 1; display: flex; align-items: center; justify-content: flex-end; gap: 3px; color: #333; }
    .ends .b:first-child { margin-right: 4px; }
    .tabs .ends button { padding: 0; border: 0; }
    .cur0 { display: flex; justify-content: space-between; align-items: center; height: 26px; padding: 0 6px 0 5px; border-bottom: 1px dotted #999; flex: none; }
    ul { list-style: none; margin: 0; padding: 0; flex: 1; }
    li { display: flex; justify-content: space-between; align-items: center; height: 23px; padding: 0 9px 0 38px; border-bottom: 1px dotted #a0a0a8; }
    li.sel { background: #88a8cc; border: 0; font-weight: 700; color: #000; }
    .foot { display: flex; height: 27px; border-top: 1px solid #9f9fa2; justify-content: flex-end; align-items: center; gap: 10px; padding-right: 19px; border-bottom: 1px solid #8e8e88; color: #333; flex: none; }
    .grip { height: 7px; background: repeating-linear-gradient(90deg, #8c8c8c 0 1px, transparent 1px 3px) 50% 50% / 22px 3px no-repeat; flex: none; }
  `];
  render() {
    const rows: [string, string][] = [["[None]", "none"], ["[Basic Graphics Frame]", ""], ["[Basic Text Frame]", "txtFrame"], ["Place Gun Frame+", "objFrame"]];
    return html`<div class="tabs"><button class="p1">Paragraph</button><button class="p2">Character S</button>
        <button class="cur"><svg class="ic" width="7" height="10" viewBox="0 0 7 10"><path d="M1 4l2.500-3L6 4M1 6l2.500 3L6 6"/></svg>Object Styles</button><button class="p4">Glyphs</button>
        <span class="ends">${btn("more", "", 11, "Collapse")}<span>|</span>${btn("menu4", "", 20, "Panel menu")}</span></div>
      <div class="cur0"><span>Place Gun Frame+</span>${btn("bolt", "", 14, "Quick apply")}</div>
      <ul>${rows.map(([t, i]) => html`<li class=${classMap({ sel: t.startsWith("P") })}><span>${t}</span>${i ? ic(i, 18) : nothing}</li>`)}</ul>
      <div class="foot">${btn("folder")}${btn("clearOv")}${btn("clearAttr")}${btn("plusBox")}${btn("trash")}</div><div class="grip"></div>`;
  }
}

/* ---------- collapsed panel dock ---------- */
@customElement("panel-dock")
class PanelDock extends LitElement {
  static styles = [shared, css`
    :host { display: flex; flex-direction: column; background: var(--panel); border-left: 3px double #8f8f86; border-right: 3px double #8f8f86; }
    .head { height: 12px; background: #a2a2a2; display: flex; align-items: center; justify-content: flex-end; padding-right: 4px; flex: none; }
    .grp { display: flex; flex-direction: column; align-items: center; padding: 10px 0 3px; border-bottom: 1px solid #94948c;
      background: repeating-linear-gradient(90deg, #8c8c8c 0 1px, transparent 1px 3px) 50% 4px / 20px 4px no-repeat; }
    .b { height: 25px; width: 29px; margin: 2px 0; }
    .head .b { width: 10px; height: 10px; margin: 0; }
    .fx { align-items: center; font-size: 17px; }
  `];
  render() {
    const groups = [["pages", "layers", "links"], ["strokeP", "swatches", "gradient"], ["fx", "wrapShape"], ["paraStyle", "charStyle", "objStyles", "glyphs"], ["charP", "paraP", "note"], ["script"], ["table", "tblStyle", "cellStyle"], ["library"]];
    return html`<div class="head">${btn("rwd", "", 10, "Expand panels")}</div>${groups.map((g) => html`<div class="grp">${g.map((n) => (n === "fx" ? fx(false) : btn(n, n === "objStyles" ? "on" : "")))}</div>`)}`;
  }
}

/* ---------- Properties panel ---------- */
@customElement("properties-panel")
class PropertiesPanel extends LitElement {
  static styles = [shared, css`
    :host { display: flex; flex-direction: column; background: var(--panel); font: 10px "DejaVu Sans Condensed", sans-serif; color: #222; }
    .head { height: 13px; background: #a2a2a2; display: flex; align-items: center; justify-content: flex-end; padding-right: 6px; flex: none; border-bottom: 1px solid #aaa; }
    .tabs { height: 28px; background: #a2a2a2; display: flex; font: 600 12px/29px Lato, "Open Sans", sans-serif; flex: none; }
    .tabs button { width: 77px; background: var(--panel); border-right: 1px solid #999; }
    section { border-bottom: 1px dotted #93939c; padding: 8px 23px 6px 10px; }
    section:last-child { border: 0; padding-top: 4px; }
    h2 { margin: 0; font: inherit; line-height: 20px; color: #111; }
    .one { padding-bottom: 7px; }
    .xf { display: grid; grid-template-columns: 32px 27px 54px 27px 54px 26px; grid-template-rows: 20px 20px; row-gap: 6px; margin-top: 5px; align-items: center; }
    .xf .field { height: 20px; border-color: #c4c4bc; }
    .xf .rg { grid-row: 1 / 3; grid-column: 1; justify-self: end; }
    .xf .lk { grid-row: 1 / 3; grid-column: 6; justify-self: end; }
    .dots { display: flex; justify-content: flex-end; height: 31px; align-items: center; margin-right: -4px; }
    .tr { padding-bottom: 0; }
    .ap { padding-bottom: 5px; }
    .ap h2 { margin-bottom: 4px; }
    .r { display: flex; height: 27px; align-items: center; }
    .ico { width: 28px; display: flex; }
    .nm { width: 62px; }
    .nm span { border-bottom: 1px solid #333; padding-right: 4px; }
    .r .field { width: 70px; }
    .r .prevbox { width: 55px; margin-left: 5px; }
    .gap { gap: 8px; }
    .als { display: flex; height: 26px; margin: 4px -6px 0 0; }
    .als .b { width: 32px; flex: none; }
    .als .b:first-child { width: 31px; border-right: 1px dotted #999; }
    .tw { display: flex; height: 26px; margin: 3px -8px 3px 0; align-items: center; gap: 6px; }
    .tw .b { width: 24px; height: 24px; flex: none; }
    .chk { display: flex; gap: 6px; align-items: center; color: #8a8a8a; }
    .chk input { appearance: none; width: 12px; height: 12px; border: 1px solid #8c8c8c; border-radius: 2px; }
    .of { display: grid; grid-template-columns: 21px 60px 62px 17px 60px; grid-template-rows: 27px 27px; align-items: center; justify-items: center; }
    .of .field { justify-self: stretch; height: 20px; }
    .of .lk { grid-row: 1 / 3; grid-column: 3; width: 25px; height: 25px; border: 1px solid #8f8f8f; border-radius: 3px; background: #adadad; color: #777; }
    .ml { display: flex; justify-content: flex-end; margin: 3px -12px -4px 0; }
    .ml .b { width: 21px; height: 22px; }
    .qa { display: grid; grid-template-columns: 1fr 1fr; gap: 10px; margin-top: 5px; }
    .qa button { height: 22px; border: 1px solid #8c8c96; border-radius: 3px; color: #111; }
    .qa .w { grid-column: 1 / 3; }
  `];
  render() {
    return html`<div class="head">${btn("ffwd", "", 10, "Collapse panels")}</div><div class="tabs"><button>Properties</button></div>
      <section class="one"><h2>Rectangle</h2></section>
      <section class="tr"><h2>Transform</h2><div class="xf"><span class="rg">${refGrid}</span>
        ${labelled("X:", "97.75 mm")}${labelled("W:", "108.5 mm")}${btn("linkBroken", "lk", 20, "Constrain proportions")}${labelled("Y:", "119.5 mm")}${labelled("H:", "138 mm")}</div>
        <div class="dots">${btn("dots", "", 18, "More options")}</div></section>
      <section class="ap"><h2>Appearance</h2>
        <div class="r"><button class="ico" aria-label="Fill color">${swatchNone}</button>Fill</div>
        <div class="r"><button class="ico" aria-label="Stroke color">${swatchStroke}</button><span class="nm"><span>Stroke</span></span>${field("Stroke weight", "5 pt", { spin: true, drop: "chev" })}<span class="prevbox">${strokePrev}</span></div>
        <div class="r"><span class="ico">${ic("corner", 18)}</span><span class="nm"><span>Corner</span></span>${field("Corner size", "4.233 mm", { spin: true })}<span class="prevbox">${cornerPrev}</span></div>
        <div class="r"><span class="ico">${ic("checker", 18)}</span><span class="nm"><span>Opacity</span></span>${field("Opacity", "100%", { drop: "chevR" })}</div>
        <div class="r gap">${btn("frameOpts", "", 19)}${fx()}</div></section>
      <section><h2>Align</h2><div class="als">${["alTo", "alL", "alC", "alR", "alT", "alM", "alB"].map((n) => btn(n))}</div></section>
      <section><h2>Text Wrap</h2><div class="tw">${btn("wrapNone", "on")}${btn("wrapBox")}${btn("wrapShape")}${btn("wrapJump")}${btn("wrapNext")}
        <label class="chk"><input type="checkbox" disabled />Invert</label></div>
        <div class="of">${ic("offT")}${field("Top offset", "0 mm", { spin: true, off: true })}${btn("link", "lk", 20)}${ic("offL")}${field("Left offset", "0 mm", { spin: true, off: true })}
        ${ic("offB")}${field("Bottom offset", "0 mm", { spin: true, off: true })}${ic("offR")}${field("Right offset", "0 mm", { spin: true, off: true })}</div>
        <div class="ml">${btn("dots", "on", 18, "More wrap options")}</div></section>
      <section><h2>Quick Actions</h2><div class="qa"><button>Arrange</button><button>Lock</button><button class="w">Convert Shape</button></div></section>`;
  }
}

@customElement("app-root")
class AppRoot extends LitElement {
  static styles = css`
    :host { display: flex; flex-direction: column; height: 100vh; min-height: 900px; overflow: hidden; background: #b8b8b9; }
    .main { flex: 1; min-height: 0; display: grid; grid-template-columns: 42px minmax(0, 1fr) 43px 253px; }
    styles-panel { position: absolute; right: -1px; top: 283px; width: 362px; height: 526px; }
  `;
  render() {
    return html`<menu-bar></menu-bar><control-bar></control-bar>
      <div class="main"><tool-box></tool-box><document-view><styles-panel></styles-panel></document-view><panel-dock></panel-dock><properties-panel></properties-panel></div>`;
  }
}
